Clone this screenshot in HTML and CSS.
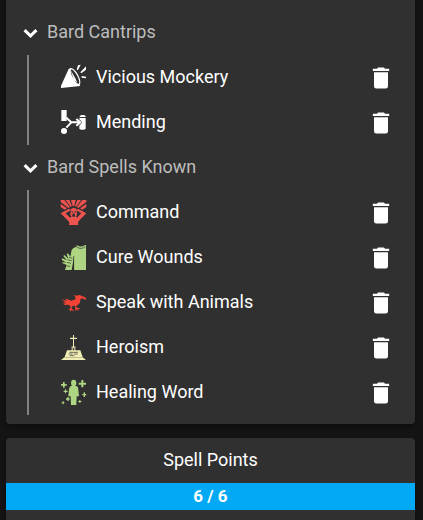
FILE: index.html
```html
<!DOCTYPE html>
<html lang="en">
<head>
<meta charset="utf-8">
<meta name="viewport" content="width=device-width, initial-scale=1">
<title>Spells</title>
<link rel="stylesheet" href="styles.css">
</head>
<body>
<svg class="defs" aria-hidden="true">
  <symbol id="chevron" viewBox="0 0 24 24"><path d="M7.200 8 12 12.800 16.800 8 19 10.200 12 17 5 10.200z"/></symbol>
  <symbol id="trash" viewBox="0 0 24 24"><path d="M6 19a2 2 0 0 0 2 2h8a2 2 0 0 0 2-2V7H6zM19 4h-3.500l-1-1h-5l-1 1H5v2h14z"/></symbol>
</svg>
<main class="page">
  <section class="card card-spells">
    <button class="group-title" type="button"><svg class="chevron"><use href="#chevron"/></svg><span class="label">Bard Cantrips</span></button>
    <ul class="spells">
      <li class="spell">
        <svg class="icon" viewBox="0 0 81 81" aria-hidden="true">
          <path d="M3 72V65L26 15 C34 28 48 50 61 66z"/>
          <ellipse cx="43" cy="39" rx="13" ry="30" transform="rotate(-28 43 39)"/>
          <ellipse class="hole" cx="45" cy="38" rx="7" ry="24" transform="rotate(-28 45 38)"/>
          <path d="M32 18 47 45 52 57 41 47z"/>
          <path d="M50 17 54 4 62 2 54 18zM61 25 78 7V17L64 28zM65 36 78 38V43L65 41z"/>
        </svg>
        <span class="label name">Vicious Mockery</span>
        <button class="delete" type="button" aria-label="Delete Vicious Mockery"><svg><use href="#trash"/></svg></button>
      </li>
      <li class="spell">
        <svg class="icon" viewBox="0 0 81 81" aria-hidden="true">
          <path d="M4 3H20V36H4z"/><circle cx="12" cy="66" r="9"/>
          <path class="stroke" d="M19 26 34 40 19 56M34 40H60M49 30 61 40 49 50"/>
          <path d="M59 22C62 17 74 17 77 22V24H59zM58 27H77V59C73 63 62 63 58 59V50L67 40 58 31z"/>
        </svg>
        <span class="label name">Mending</span>
        <button class="delete" type="button" aria-label="Delete Mending"><svg><use href="#trash"/></svg></button>
      </li>
    </ul>
    <button class="group-title" type="button"><svg class="chevron"><use href="#chevron"/></svg><span class="label">Bard Spells Known</span></button>
    <ul class="spells">
      <li class="spell">
        <svg class="icon red" viewBox="0 0 81 81" aria-hidden="true">
          <path d="M2 3H13L30 24 25 27 2 9zM2 15 21 28 14 32 2 24zM17 3H28L36 22 32 23zM33 3H47L43 21H38zM52 3H63L49 23 45 22zM67 3H79V9L55 27 51 24zM79 15V24L67 32 60 28z"/>
          <path d="M27 29 32 34 17 43 28 54H53L64 43 49 34 54 29 79 43 59 63 54 70 55 78H27L28 70 22 63 2 43z"/>
          <path d="M32 31Q41 21 50 31L51 48 45 57H37L31 48z"/>
          <path class="hole" d="M34 36 39 38V41L34 39zM43 38 48 36V39L43 41zM37 46Q41 41 45 46V53H37zM28 46 31 56 28 55zM54 46 51 56 54 55z"/>
        </svg>
        <span class="label name">Command</span>
        <button class="delete" type="button" aria-label="Delete Command"><svg><use href="#trash"/></svg></button>
      </li>
      <li class="spell">
        <svg class="icon green" viewBox="0 0 81 81" aria-hidden="true">
          <path d="M50 3Q63 12 75 3H78V78H42V38L35 78H15L20 63 8 58 7 54 19 56 5 47 7 43 20 49 10 36 13 33 25 44 20 30 24 28 31 38 35 18Q38 11 50 8z"/>
          <path class="cut" d="M22 47 35 50M20 55 33 58M27 40 37 43M20 65 31 68M41 36V78M50 9Q63 18 76 8"/>
        </svg>
        <span class="label name">Cure Wounds</span>
        <button class="delete" type="button" aria-label="Delete Cure Wounds"><svg><use href="#trash"/></svg></button>
      </li>
      <li class="spell">
        <svg class="icon scarlet" viewBox="0 0 81 81" aria-hidden="true">
          <path d="M4 31 21 35 16 28 28 33 35 35 47 30 45 22 40 18 51 20Q58 15 65 21L76 25 79 34 67 28 61 30Q62 43 54 47L49 50 50 56 60 58 59 60 53 60 57 65 50 62 45 65 46 51 40 50 35 54 37 61 44 67 34 64 30 69 30 63 24 60 31 59 32 52 25 47 16 48 9 45 18 43 6 39 16 38z"/>
        </svg>
        <span class="label name">Speak with Animals</span>
        <button class="delete" type="button" aria-label="Delete Speak with Animals"><svg><use href="#trash"/></svg></button>
      </li>
      <li class="spell">
        <svg class="icon cream" viewBox="0 0 81 81" aria-hidden="true">
          <path d="M39 3H42V11H51V15H42V43H39V15H30V11H39zM35 37H38V49H35zM43 37H46V49H43zM21 49H61L68 69H14zM13 70H68L78 78H3z"/>
          <path class="cut" d="M28 55H54M26 60H38M42 60H53M29 65H43"/>
        </svg>
        <span class="label name">Heroism</span>
        <button class="delete" type="button" aria-label="Delete Heroism"><svg><use href="#trash"/></svg></button>
      </li>
      <li class="spell">
        <svg class="icon green" viewBox="0 0 81 81" aria-hidden="true">
          <ellipse cx="41" cy="12" rx="8" ry="10"/>
          <path d="M34 21H48Q55 22 55 32L57 52H50L49 78H33L32 52H25L27 32Q28 22 34 21z"/>
          <path d="M9 9H14V15H20V20H14V26H9V20H3V15H9zM64 3H70V11H78V17H70V25H64V17H56V11H64zM15 31H18V35H23V39H18V43H15V39H11V35H15zM71 40H75V45H79V49H75V54H71V49H67V45H71zM22 54H26V58H29V62H26V66H22V62H18V58H22zM58 63H61V66H64V69H61V72H58V69H55V66H58zM8 67H11V70H13V73H11V76H8V73H5V70H8z"/>
        </svg>
        <span class="label name">Healing Word</span>
        <button class="delete" type="button" aria-label="Delete Healing Word"><svg><use href="#trash"/></svg></button>
      </li>
    </ul>
  </section>
  <section class="card card-points">
    <h2 class="points-title">Spell Points</h2>
    <div class="points-bar">6 / 6</div>
  </section>
</main>
</body>
</html>
```
FILE: styles.css
```css
* { box-sizing: border-box; }
body {
  margin: 0;
  background: #141414;
  color: #fff;
  font: 400 18px/24px Roboto, sans-serif;
}
.defs { position: absolute; width: 0; height: 0; }
.page {
  display: flex;
  flex-direction: column;
  gap: 14px;
  padding: 0 8px 0 6px;
}
.card {
  background: #303030;
  box-shadow: 0 2px 4px rgba(0, 0, 0, .4);
}
.card-spells {
  padding: 10px 20px 9px 12px;
  border-radius: 0 0 4px 4px;
}
.card-points { padding-bottom: 10px; border-radius: 4px 4px 0 0; }
button {
  padding: 0;
  border: 0;
  background: none;
  color: inherit;
  font: inherit;
  cursor: pointer;
}
.group-title {
  display: flex;
  align-items: center;
  gap: 4px;
  width: 100%;
  height: 45px;
  color: #bdbdbd;
}
.chevron { width: 25px; height: 24px; fill: #fff; }
.label { padding-bottom: 2px; }
.spells {
  margin: 0 0 0 9px;
  padding: 0 0 0 31px;
  border-left: 2px solid #828282;
  list-style: none;
}
.spell {
  display: flex;
  align-items: center;
  height: 45px;
}
.icon { width: 27px; height: 27px; fill: #fff; }
.icon .stroke { fill: none; stroke: #fff; stroke-width: 6; }
.icon .cut { fill: none; stroke: #303030; stroke-width: 2; }
.icon .hole { fill: #303030; }
.red { fill: #ef5350; }
.scarlet { fill: #f44336; }
.green { fill: #aed581; }
.cream { fill: #f0eeb4; }
.name { flex: 1; margin-left: 9px; }
.delete { display: flex; }
.delete svg { width: 28px; height: 28px; fill: #fff; }
.points-title {
  margin: 0;
  padding-bottom: 2px;
  font-size: 18px;
  font-weight: 400;
  line-height: 43px;
  text-align: center;
}
.points-bar {
  background: #03a9f4;
  font-size: 17px;
  font-weight: 700;
  line-height: 27px;
  text-align: center;
}
```
